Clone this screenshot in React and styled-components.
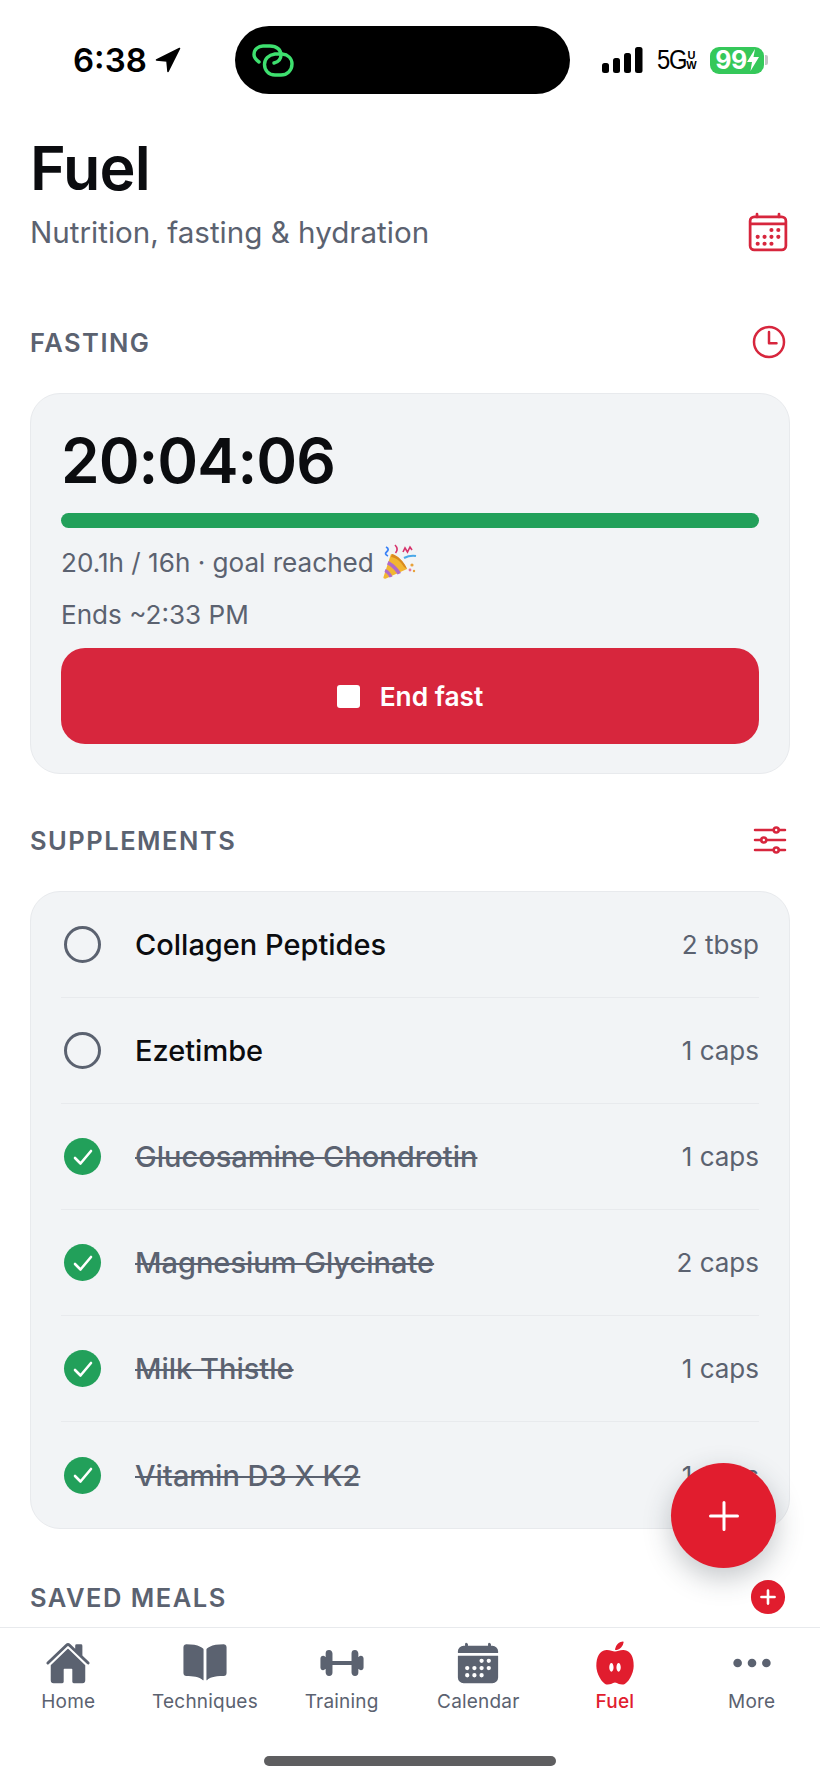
import React from "react";
import styled, { createGlobalStyle } from "styled-components";
import {
  IoHome, IoBook, IoBarbell, IoCalendar, IoNutrition, IoEllipsisHorizontal,
  IoCalendarOutline, IoTimeOutline, IoOptionsOutline, IoAddCircle, IoAdd,
} from "react-icons/io5";

const Global = createGlobalStyle`
  html, body { margin: 0; padding: 0; background: #fff; }
  body { font-family: Inter, "Liberation Sans", sans-serif; }
  * { box-sizing: border-box; }
`;

const Page = styled.div`
  position: relative;
  width: 820px;
  height: 1782px;
  overflow: hidden;
  display: flex;
  flex-direction: column;
  background: #fff;
  color: #0b0c0f;
`;

const StatusBar = styled.div`
  height: 123px;
  flex: none;
  display: flex;
  align-items: flex-start;
  padding-top: 26px;
`;
const StatusLeft = styled.div`
  width: 235px;
  height: 68px;
  padding-left: 73px;
  display: flex;
  align-items: center;
  gap: 8px;
  font-size: 33px;
  font-weight: 600;
  color: #000;
`;
const Island = styled.div`
  width: 335px;
  height: 68px;
  border-radius: 34px;
  background: #000;
  display: flex;
  align-items: center;
  padding-left: 17px;
`;
const StatusRight = styled.div`
  flex: 1;
  height: 68px;
  padding-left: 32px;
  display: flex;
  align-items: center;
  color: #000;
`;
const FiveG = styled.span`
  margin-left: 14px;
  margin-right: -4px;
  font-family: "Liberation Sans", sans-serif;
  font-size: 27px;
  letter-spacing: -1.5px;
  line-height: 1;
  transform: scaleX(0.88);
  transform-origin: left center;
`;
const UW = styled.span`
  display: flex;
  flex-direction: column;
  font-family: "Liberation Sans", sans-serif;
  font-size: 11px;
  font-weight: 700;
  line-height: 10px;
  text-align: center;
  width: 11px;
`;
const Battery = styled.div`
  margin-left: 13px;
  width: 54px;
  height: 27px;
  border-radius: 9px;
  background: #35c85a;
  color: #fff;
  display: flex;
  align-items: center;
  justify-content: center;
  font-size: 25px;
  font-weight: 700;
  letter-spacing: -0.5px;
`;
const BatteryNib = styled.div`
  width: 3px;
  height: 10px;
  margin-left: 1px;
  border-radius: 0 2px 2px 0;
  background: #c4c4c6;
`;

const Main = styled.main`
  flex: 1;
  min-height: 0;
  overflow: hidden;
  padding: 10px 30px 0;
`;
const Title = styled.h1`
  margin: 0;
  font-size: 61px;
  line-height: 70px;
  font-weight: 600;
  letter-spacing: -0.8px;
  color: #0b0c0f;
`;
const SubRow = styled.div`
  display: flex;
  align-items: center;
  justify-content: space-between;
  height: 40px;
  margin-top: 9px;
  svg { width: 44px; height: 44px; color: #d7263d; }
`;
const Subtitle = styled.p`
  margin: 0;
  font-size: 29.6px;
  line-height: 40px;
  color: #5b6270;
`;
const SectionHead = styled.div`
  display: flex;
  align-items: center;
  justify-content: space-between;
  height: 40px;
  margin-top: ${(p) => p.$top}px;
  margin-bottom: ${(p) => p.$bottom}px;
`;
const SectionTitle = styled.h2`
  margin: 0;
  font-size: 25.5px;
  font-weight: 600;
  letter-spacing: 1.5px;
  color: #5b6270;
`;
const HeadIcon = styled.span`
  display: flex;
  color: ${(p) => p.$color || "#d7263d"};
  margin-right: ${(p) => p.$right ?? 0}px;
  svg { width: ${(p) => p.$size}px; height: ${(p) => p.$size}px; }
`;
const Card = styled.section`
  background: #f2f4f6;
  border: 1px solid #e8eaed;
  border-radius: 30px;
  padding: ${(p) => p.$pad};
`;
const Timer = styled.div`
  font-size: 62px;
  line-height: 76px;
  font-weight: 600;
  color: #0b0c0f;
  letter-spacing: -1px;
`;
const Bar = styled.div`
  height: 15px;
  margin: 14px 0 16px;
  border-radius: 8px;
  background: #22a05a;
`;
const Meta = styled.div`
  display: flex;
  align-items: center;
  gap: 8px;
  height: 36px;
  margin-bottom: 16px;
  font-size: 26.1px;
  color: #5b6270;
`;
const EndButton = styled.button`
  width: 100%;
  height: 96px;
  border: none;
  border-radius: 24px;
  background: #d7263d;
  color: #fff;
  font-family: inherit;
  font-size: 26.3px;
  font-weight: 600;
  display: flex;
  align-items: center;
  justify-content: center;
  gap: 20px;
`;
const StopBox = styled.span`
  width: 23px;
  height: 23px;
  border-radius: 3px;
  background: #fff;
`;
const Row = styled.div`
  height: 106px;
  display: flex;
  align-items: center;
  padding-left: 3px;
  border-bottom: ${(p) => (p.$last ? "none" : "1px solid #e8eaed")};
`;
const EmptyCheck = styled.span`
  width: 37px;
  height: 37px;
  flex: none;
  border-radius: 50%;
  border: 3px solid #5b6270;
`;
const DoneCheck = styled.span`
  width: 37px;
  height: 37px;
  flex: none;
  border-radius: 50%;
  background: #22a05a;
  color: #fff;
  display: flex;
  align-items: center;
  justify-content: center;
`;
const Name = styled.span`
  flex: 1;
  margin-left: 34px;
  font-size: 29px;
  font-weight: 500;
  color: ${(p) => (p.$done ? "#5b6270" : "#0b0c0f")};
  text-decoration: ${(p) => (p.$done ? "line-through" : "none")};
  text-decoration-thickness: 2px;
`;
const Amount = styled.span`
  font-size: 26px;
  color: #5b6270;
`;

const Fab = styled.button`
  position: absolute;
  left: 671px;
  top: 1463px;
  width: 105px;
  height: 105px;
  border: none;
  border-radius: 50%;
  background: #e11d2e;
  color: #fff;
  display: flex;
  align-items: center;
  justify-content: center;
  box-shadow: 0 10px 28px rgba(40, 50, 60, 0.28);
  svg { width: 48px; height: 48px; }
`;

const Nav = styled.nav`
  flex: none;
  height: 155px;
  border-top: 1px solid #e8eaed;
  background: #fff;
  display: flex;
  flex-direction: column;
  align-items: center;
`;
const Tabs = styled.div`
  width: 100%;
  display: grid;
  grid-template-columns: repeat(6, 1fr);
  padding-top: 11px;
`;
const Tab = styled.div`
  display: flex;
  flex-direction: column;
  align-items: center;
  color: ${(p) => (p.$active ? "#e11d2e" : "#5b6270")};
  font-size: 19px;
  line-height: 24px;
  font-weight: ${(p) => (p.$active ? 500 : 400)};
  letter-spacing: 0.2px;
  svg { width: 46px; height: 46px; }
`;
const TabIcon = styled.span`
  height: 47px;
  margin-bottom: 4px;
  display: flex;
  align-items: center;
  justify-content: center;
`;
const HomeIndicator = styled.div`
  width: 292px;
  height: 10px;
  margin-top: 42px;
  border-radius: 5px;
  background: #5e5e60;
`;

const LinkMark = () => (
  <svg width="42" height="33" viewBox="0 0 42 33" fill="none" stroke="#3ee06f" strokeWidth="3.4" strokeLinecap="round" strokeLinejoin="round">
    <path d="M7 18 C3.5 15.5 2 13 2 10.5 C2 5 6.5 2 11 2 L18 2 C25 2 29 6 29 11 C29 15 26 18 22 19" />
    <path d="M23 10 L30 10 C36 10.5 40 14.5 40 20 C40 26.5 35 31 29 31 L23 31 C16.5 31 12.5 26 12.5 20.5 C12.5 15 16.5 11 23 10 Z" />
  </svg>
);
const LocationArrow = () => (
  <svg width="26" height="26" viewBox="0 0 26 26" fill="#000" stroke="#000" strokeWidth="1.6" strokeLinejoin="round">
    <path d="M24.5 1.5 L1.5 13 L12 14 L13 24.5 Z" />
  </svg>
);
const Signal = () => (
  <svg width="41" height="26" viewBox="0 0 41 26" fill="#000">
    <rect x="0" y="16" width="7" height="10" rx="2.5" />
    <rect x="11" y="11" width="7" height="15" rx="2.5" />
    <rect x="22" y="6" width="7" height="20" rx="2.5" />
    <rect x="33" y="0" width="7.5" height="26" rx="2.5" />
  </svg>
);
const Bolt = () => (
  <svg width="12" height="22" viewBox="0 0 12 22" fill="#fff">
    <path d="M8 0 L0 13 H5 L3.5 22 L12 8 H6.5 Z" />
  </svg>
);
const Popper = () => (
  <svg width="36" height="36" viewBox="0 0 36 36" fill="none">
    <path d="M1.5 33 C1 34.5 2.5 35 4 34.5 L25 25 C22 18 16 12 9 10 Z" fill="#f2b632" />
    <path d="M6.5 17 C11 19 17 25 19 29 L15.5 30.5 C13 26 9 22 5 20.5 Z" fill="#b06ac8" />
    <path d="M3.5 25 C6 26 9 29 10.5 32.5 L7.5 33.5 C6.5 31 4.5 29 2.5 28 Z" fill="#b06ac8" />
    <path d="M10 10 C15 11 22 17 25 25 L22 23 C19 18 15 14 9 13 Z" fill="#d98a1e" />
    <path d="M4 3 Q8 5 4.5 8 Q2 10 6 12" stroke="#3b82f6" strokeWidth="1.8" />
    <path d="M13 1 Q17 5 13.5 9 M21 8 L23 4 L25.5 8 L28 3 L30 6" stroke="#d6336c" strokeWidth="1.6" />
    <path d="M22 14 Q28 11 34 12" stroke="#4aa8e8" strokeWidth="2.2" />
    <circle cx="30" cy="21" r="1.6" fill="#e8a13a" />
    <circle cx="28" cy="26" r="1.4" fill="#e8749a" />
    <circle cx="32" cy="27" r="1.2" fill="#e8a13a" />
  </svg>
);

const supplements = [
  { name: "Collagen Peptides", amount: "2 tbsp" },
  { name: "Ezetimbe", amount: "1 caps" },
  { name: "Glucosamine Chondrotin", amount: "1 caps", done: true },
  { name: "Magnesium Glycinate", amount: "2 caps", done: true },
  { name: "Milk Thistle", amount: "1 caps", done: true },
  { name: "Vitamin D3 X K2", amount: "1 caps", done: true },
];
const tabs = [
  { label: "Home", Icon: IoHome },
  { label: "Techniques", Icon: IoBook },
  { label: "Training", Icon: IoBarbell },
  { label: "Calendar", Icon: IoCalendar },
  { label: "Fuel", Icon: IoNutrition, active: true },
  { label: "More", Icon: IoEllipsisHorizontal },
];

export default function App() {
  return (
    <Page>
      <Global />
      <StatusBar>
        <StatusLeft>6:38<LocationArrow /></StatusLeft>
        <Island><LinkMark /></Island>
        <StatusRight>
          <Signal />
          <FiveG>5G</FiveG>
          <UW><span>U</span><span>W</span></UW>
          <Battery>99<Bolt /></Battery>
          <BatteryNib />
        </StatusRight>
      </StatusBar>
      <Main>
        <Title>Fuel</Title>
        <SubRow>
          <Subtitle>Nutrition, fasting &amp; hydration</Subtitle>
          <IoCalendarOutline />
        </SubRow>
        <SectionHead $top={70} $bottom={31}>
          <SectionTitle>FASTING</SectionTitle>
          <HeadIcon $size={40} $right={1}><IoTimeOutline /></HeadIcon>
        </SectionHead>
        <Card $pad="29px 30px">
          <Timer>20:04:06</Timer>
          <Bar />
          <Meta>20.1h / 16h · goal reached <Popper /></Meta>
          <Meta>Ends ~2:33 PM</Meta>
          <EndButton><StopBox />End fast</EndButton>
        </Card>
        <SectionHead $top={46} $bottom={31}>
          <SectionTitle>SUPPLEMENTS</SectionTitle>
          <HeadIcon $size={40}><IoOptionsOutline /></HeadIcon>
        </SectionHead>
        <Card $pad="0 30px">
          {supplements.map((s, i) => (
            <Row key={s.name} $last={i === supplements.length - 1}>
              {s.done ? (
                <DoneCheck>
                  <svg width="22" height="18" viewBox="0 0 22 18" fill="none" stroke="#fff" strokeWidth="2.6" strokeLinecap="round" strokeLinejoin="round">
                    <path d="M3 10 L8.5 15.5 L19 3" />
                  </svg>
                </DoneCheck>
              ) : <EmptyCheck />}
              <Name $done={s.done}>{s.name}</Name>
              <Amount>{s.amount}</Amount>
            </Row>
          ))}
        </Card>
        <SectionHead $top={48} $bottom={0}>
          <SectionTitle>SAVED MEALS</SectionTitle>
          <HeadIcon $size={42} $color="#e11d2e" $right={1}><IoAddCircle /></HeadIcon>
        </SectionHead>
      </Main>
      <Nav>
        <Tabs>
          {tabs.map(({ label, Icon, active }) => (
            <Tab key={label} $active={active}>
              <TabIcon><Icon /></TabIcon>
              {label}
            </Tab>
          ))}
        </Tabs>
        <HomeIndicator />
      </Nav>
      <Fab><IoAdd /></Fab>
    </Page>
  );
}
